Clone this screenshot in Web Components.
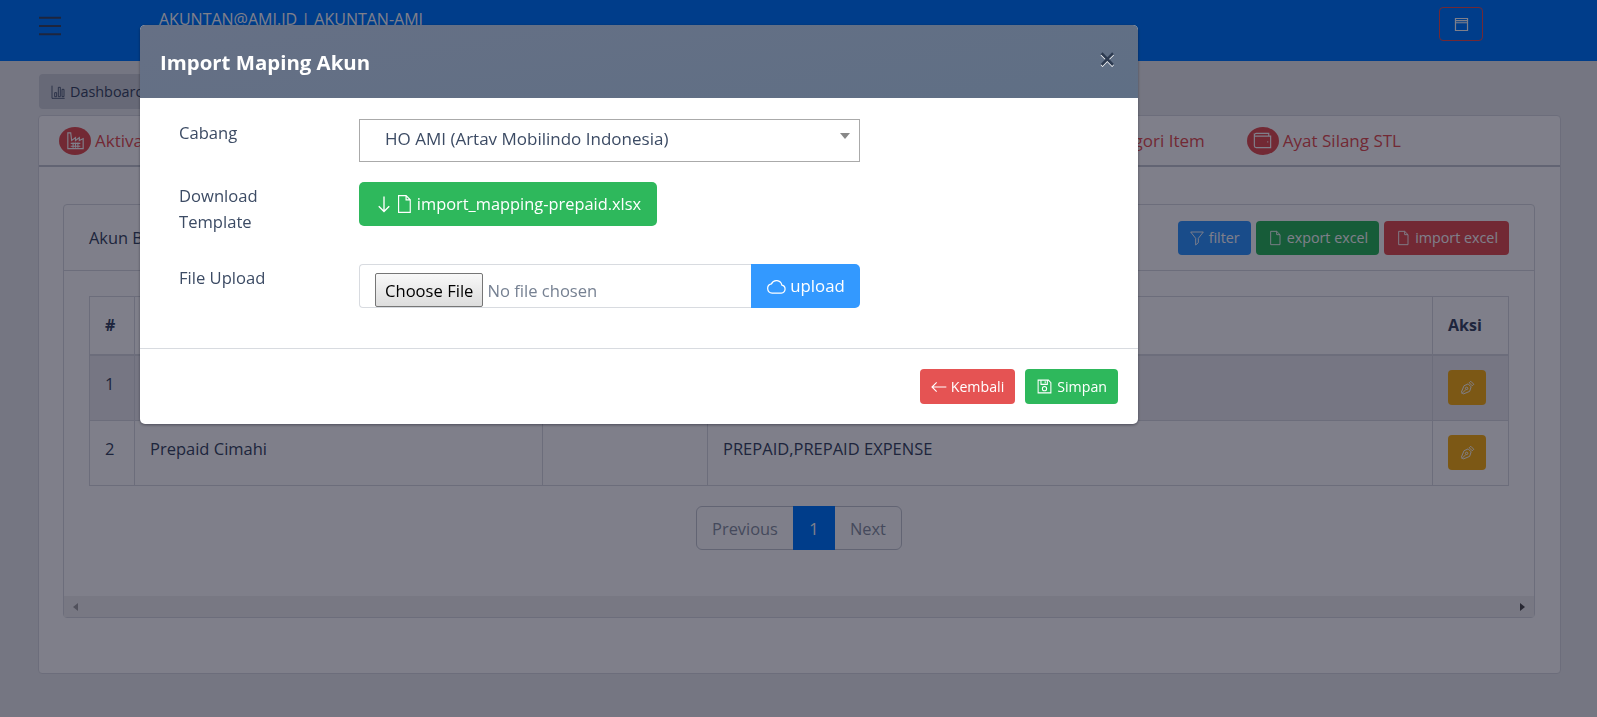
<!DOCTYPE html>
<html>
<head>
<meta charset="utf-8">
<title>Import Maping Akun</title>
<style>
    html, body {
        margin: 0;
        height: 100%;
        overflow: hidden;
        background: #ebedef;
        color: #3c4b64;
        font-family: "Open Sans", "Noto Sans", sans-serif;
        font-size: 16.4px;
    }
</style>
</head>
<body>
<app-header label="AKUNTAN@AMI.ID | AKUNTAN-AMI"></app-header>
<app-main>
    <crumb-tab>Dashboard</crumb-tab>
    <tab-card>
        <tab-link slot="left" icon="factory">Aktiva</tab-link>
        <tab-link slot="right" icon="wallet">Kategori Item</tab-link>
        <tab-link slot="right" icon="wallet">Ayat Silang STL</tab-link>
        <data-panel title-text="Akun Beban">
            <data-table></data-table>
            <page-nav></page-nav>
        </data-panel>
    </tab-card>
</app-main>
<import-modal heading="Import Maping Akun"></import-modal>

<script>
const ICONS = {
    menu: '<path d="M0 3h24M0 12h24M0 21h24"/>',
    window: '<path d="M3.5 3.5h17v17h-17zM3.5 6.5h17M3.5 9.5h17"/>',
    chart: '<path d="M3 2.5v19h19M7 13h3v6H7zM12.5 5h3v14h-3zM18 8h3v11h-3z"/>',
    file: '<path d="M5.5 2h9l5 5v15h-14zM14.5 2v5h5"/>',
    down: '<path d="M12 2v20M5 15l7 7 7-7"/>',
    left: '<path d="M23 12H1.5M8.5 5l-7 7 7 7"/>',
    cloud: '<path d="M7 19.5h10.5a4.6 4.6 0 0 0 .6-9.1A6.3 6.3 0 0 0 6.2 9 5.3 5.3 0 0 0 7 19.5z"/>',
    filter: '<path d="M2.5 3h19l-7.5 9.5v6.5l-4 3.5v-10z"/>',
    save: '<path d="M3 3h14.5L21 6.5V21H3zM7 3v6h9V3M13 4.5v3"/><circle cx="12" cy="15" r="3"/>',
    nib: '<path d="M13.5 6.5l4 4-2 6-8.5 3.5-2.5-2.5 3.5-8.5zM5 19.5l5.5-5.5M15 5l2-2 4 4-2 2z"/><circle cx="11.5" cy="12.5" r="1.6"/>',
    factory: '<path d="M4 20.5V4h3l1 8 4-3v3l4-3v3l4-2v10.500zM7 15h10M7 18h10M9.500 14v5.500M12 14v5.500M14.500 14v5.500"/>',
    wallet: '<path d="M3.500 6.500A2 2 0 0 1 5.500 4.500h13v3M3.500 6.500v11a2 2 0 0 0 2 2h15v-12h-15a2 2 0 0 1-2-1zM17 13.500h1"/>',
}

class LineIcon extends HTMLElement {
    constructor() {
        super()
        this.attachShadow({ mode: 'open' })
        let size = this.getAttribute('size') || 16
        let weight = this.getAttribute('weight') || 1.4
        this.shadowRoot.innerHTML = `
            <style>
                :host { display: inline-flex; flex: none; }
                svg { fill: none; stroke: currentColor; stroke-width: ${weight}; display: block; }
            </style>
            <svg width="${size}" height="${size}" viewBox="0 0 24 24">${ICONS[this.getAttribute('name')]}</svg>
        `
    }
}

class AppHeader extends HTMLElement {
    constructor() {
        super()
        this.attachShadow({ mode: 'open' })
        this.shadowRoot.innerHTML = `
            <style>
                :host {
                    display: flex;
                    height: 61px;
                    background: #007bff;
                    box-sizing: border-box;
                    padding: 7px 114px 0 39px;
                }
                .burger { color: #3c4b64; margin-top: 8px; }
                .label {
                    margin: 1px 0 0 98px;
                    font-size: 16px;
                    line-height: 22px;
                    color: #fff;
                    flex: 1;
                }
                .win {
                    width: 44px;
                    height: 34px;
                    box-sizing: border-box;
                    border: 1px solid #e55353;
                    border-radius: 4px;
                    color: #fff;
                    display: flex;
                    align-items: center;
                    justify-content: center;
                }
            </style>
            <line-icon class="burger" name="menu" size="22" weight="2"></line-icon>
            <div class="label">${this.getAttribute('label')}</div>
            <div class="win"><line-icon name="window" size="17" weight="1.7"></line-icon></div>
        `
    }
}

class AppMain extends HTMLElement {
    constructor() {
        super()
        this.attachShadow({ mode: 'open' })
        this.shadowRoot.innerHTML = `
            <style>
                :host { display: block; padding: 13px 36px 0 38px; }
            </style>
            <slot></slot>
        `
    }
}

class CrumbTab extends HTMLElement {
    constructor() {
        super()
        this.attachShadow({ mode: 'open' })
        this.shadowRoot.innerHTML = `
            <style>
                :host {
                    display: flex;
                    align-items: center;
                    gap: 4px;
                    width: 130px;
                    height: 35px;
                    margin-left: 1px;
                    padding-left: 11px;
                    background: #ced2d8;
                    border-radius: 4px;
                    font-size: 14.4px;
                }
            </style>
            <line-icon name="chart" size="16" weight="1.2"></line-icon>
            <slot></slot>
        `
    }
}

class TabLink extends HTMLElement {
    constructor() {
        super()
        this.attachShadow({ mode: 'open' })
        this.shadowRoot.innerHTML = `
            <style>
                :host {
                    display: flex;
                    align-items: center;
                    gap: 4px;
                    color: #e55353;
                    font-size: 17px;
                }
                .dot {
                    width: 32px;
                    height: 28px;
                    border-radius: 50%;
                    background: #e55353;
                    color: #fff;
                    display: flex;
                    align-items: center;
                    justify-content: center;
                }
            </style>
            <span class="dot"><line-icon name="${this.getAttribute('icon')}" size="23" weight="1.2"></line-icon></span>
            <slot></slot>
        `
    }
}

class TabCard extends HTMLElement {
    constructor() {
        super()
        this.attachShadow({ mode: 'open' })
        this.shadowRoot.innerHTML = `
            <style>
                :host {
                    display: block;
                    height: 559px;
                    margin-top: 6px;
                    box-sizing: border-box;
                    background: #fff;
                    border: 1px solid #d8dbe0;
                    border-radius: 4px;
                }
                .tabs {
                    display: flex;
                    justify-content: space-between;
                    align-items: center;
                    height: 49px;
                    padding: 0 159px 0 20px;
                    border-bottom: 2px solid #c4c9d0;
                }
                .right { display: flex; gap: 42px; }
                .body { padding: 37px 25px 0 24px; }
            </style>
            <div class="tabs">
                <slot name="left"></slot>
                <div class="right"><slot name="right"></slot></div>
            </div>
            <div class="body"><slot></slot></div>
        `
    }
}

class DataPanel extends HTMLElement {
    constructor() {
        super()
        this.attachShadow({ mode: 'open' })
        this.shadowRoot.innerHTML = `
            <style>
                :host {
                    height: 414px;
                    box-sizing: border-box;
                    border: 1px solid #d8dbe0;
                    border-radius: 4px;
                    display: flex;
                    flex-direction: column;
                }
                .head {
                    display: flex;
                    align-items: center;
                    height: 65px;
                    padding: 0 25px 0 25px;
                    border-bottom: 1px solid #d8dbe0;
                    gap: 5px;
                }
                .title { flex: 1; font-size: 16.4px; }
                .inner { flex: 1; padding: 25px 26px 0 25px; }
                .scroll {
                    height: 21px;
                    background: #f1f1f1;
                    display: flex;
                    justify-content: space-between;
                    align-items: center;
                    padding: 0 9px;
                }
                .scroll i { width: 0; height: 0; border: 4.5px solid transparent; }
                .scroll i.l { border-right: 5px solid #a3a3a3; border-left: 0; }
                .scroll i.r { border-left: 5px solid #505050; border-right: 0; }
            </style>
            <div class="head">
                <div class="title">${this.getAttribute('title-text')}</div>
                <act-button color="#3399ff" icon="filter" compact>filter</act-button>
                <act-button color="#2eb85c" icon="file" compact>export excel</act-button>
                <act-button color="#e55353" icon="file" compact>import excel</act-button>
            </div>
            <div class="inner"><slot></slot></div>
            <div class="scroll"><i class="l"></i><i class="r"></i></div>
        `
    }
}

class ActButton extends HTMLElement {
    constructor() {
        super()
        this.attachShadow({ mode: 'open' })
        let icon = this.getAttribute('icon')
        this.shadowRoot.innerHTML = `
            <style>
                :host {
                    display: inline-flex;
                    align-items: center;
                    justify-content: center;
                    box-sizing: border-box;
                    height: var(--h, 34px);
                    padding: 0 var(--px, 11px);
                    gap: var(--g, 4px);
                    background: ${this.getAttribute('color')};
                    color: #fff;
                    border-radius: var(--r, 4px);
                    font-size: var(--fs, 14.3px);
                    white-space: nowrap;
                }
            </style>
            <line-icon name="${icon}" size="${this.getAttribute('isize') || 16}" weight="${this.getAttribute('iweight') || 1.4}"></line-icon>
            <slot></slot>
        `
    }
}

class DataTable extends HTMLElement {
    constructor() {
        super()
        this.attachShadow({ mode: 'open' })
        let edit = '<span class="edit"><line-icon name="nib" size="18" weight="1.3"></line-icon></span>'
        this.shadowRoot.innerHTML = `
            <style>
                :host { display: block; }
                table {
                    border-collapse: collapse;
                    table-layout: fixed;
                    width: 1419px;
                    font-size: 16.5px;
                }
                th, td {
                    border: 1px solid #d8dbe0;
                    padding: 16px 15px 0;
                    text-align: left;
                    vertical-align: top;
                    line-height: 24px;
                }
                th { border-bottom-width: 2px; height: 41px; font-weight: 700; font-size: 16px; padding-top: 16px; }
                td { height: 48px; }
                tr.hi td { background: #ececf0; }
                .edit {
                    display: flex;
                    width: 38px;
                    height: 35px;
                    align-items: center;
                    justify-content: center;
                    background: #f9b115;
                    color: #fff;
                    border-radius: 4px;
                }
                td.act { padding: 14px 15px 0; height: 50px; }
            </style>
            <table>
                <colgroup><col style="width:45px"><col style="width:408px"><col style="width:165px"><col style="width:725px"><col style="width:76px"></colgroup>
                <tr><th>#</th><th></th><th></th><th></th><th>Aksi</th></tr>
                <tr class="hi"><td>1</td><td></td><td></td><td></td><td class="act">${edit}</td></tr>
                <tr><td>2</td><td>Prepaid Cimahi</td><td></td><td>PREPAID,PREPAID EXPENSE</td><td class="act">${edit}</td></tr>
            </table>
        `
    }
}

class PageNav extends HTMLElement {
    constructor() {
        super()
        this.attachShadow({ mode: 'open' })
        this.shadowRoot.innerHTML = `
            <style>
                :host { display: flex; justify-content: center; margin: 20px 0 0 1px; }
                .nav { display: flex; height: 44px; border: 1px solid #c4c9d0; border-radius: 6px; box-sizing: border-box; font-size: 16.4px; color: #8a93a2; }
                span { display: flex; align-items: center; padding: 0 15px; }
                .on { background: #007bff; color: #fff; padding: 0; width: 42px; justify-content: center; margin: -1px 0; }
            </style>
            <div class="nav"><span>Previous</span><span class="on">1</span><span>Next</span></div>
        `
    }
}

class FormRow extends HTMLElement {
    constructor() {
        super()
        this.attachShadow({ mode: 'open' })
        this.shadowRoot.innerHTML = `
            <style>
                :host {
                    display: grid;
                    grid-template-columns: 180px 501px;
                    font-size: 16.6px;
                    line-height: 26px;
                }
                .label { color: #3c4b64; width: 110px; padding-top: 1px; }
            </style>
            <div class="label"><slot name="label"></slot></div>
            <div><slot></slot></div>
        `
    }
}

class ImportModal extends HTMLElement {
    constructor() {
        super()
        this.attachShadow({ mode: 'open' })
        this.shadowRoot.innerHTML = `
            <style>
                :host {
                    position: fixed;
                    inset: 0;
                    background: rgba(0, 0, 21, .5);
                    display: block;
                }
                .modal {
                    width: 998px;
                    height: 399px;
                    margin: 25px 0 0 140px;
                    background: #fff;
                    border-radius: 5px;
                    box-shadow: 0 1px 3px rgba(0, 0, 21, .4);
                    overflow: hidden;
                    display: flex;
                    flex-direction: column;
                }
                .head {
                    height: 73px;
                    flex: none;
                    display: flex;
                    align-items: center;
                    justify-content: space-between;
                    padding: 0 22px 0 20px;
                    background: linear-gradient(170deg, #667085, #5f6f85);
                    color: #fff;
                }
                h5 { margin: 0; font-size: 20.4px; font-weight: 700; }
                .x { color: #2c3a50; font-size: 30px; line-height: 1; font-weight: 600; text-shadow: 0 1px 0 #fff; margin-top: -5px; }
                .body {
                    flex: 1;
                    padding: 21px 0 0 39px;
                    display: flex;
                    flex-direction: column;
                    gap: 20px;
                    border-bottom: 1px solid #d8dbe0;
                }
                .select {
                    height: 43px;
                    box-sizing: border-box;
                    border: 1px solid #aaa;
                    display: flex;
                    align-items: center;
                    justify-content: space-between;
                    padding: 0 9px 3px 25px;
                    color: #3c4b64;
                    font-size: 17px;
                }
                .select i { width: 0; height: 0; border: 5px solid transparent; border-top: 6px solid #888; border-bottom: 0; margin-top: -6px; }
                .last { margin-top: 9px; }
                .up { display: flex; }
                .file {
                    flex: 1;
                    box-sizing: border-box;
                    height: 44px;
                    border: 1px solid #d8dbe0;
                    border-right: 0;
                    border-radius: 4px 0 0 4px;
                    padding: 8px 0 0 15px;
                    overflow: hidden;
                }
                input {
                    font: inherit;
                    line-height: normal;
                    color: #768192;
                    width: 370px;
                    display: block;
                }
                input::file-selector-button {
                    font: inherit;
                    color: #000;
                    height: 34px;
                    padding: 0 9px;
                    margin: 0 4px 0 0;
                    background: linear-gradient(#f8f8f8, #ddd);
                    border: 1px solid #767676;
                    border-radius: 2px;
                }
                .foot {
                    height: 75px;
                    flex: none;
                    display: flex;
                    justify-content: flex-end;
                    align-items: center;
                    gap: 10px;
                    padding: 0 20px;
                    box-sizing: border-box;
                }
                .big { --h: 44px; --fs: 16.8px; --r: 5px; --px: 15px; --g: 3px; }
                .wide { width: 298px; --fs: 16.4px; --g: 1px; }
                .send { width: 109px; border-radius: 0 5px 5px 0; --px: 0; }
                .foot act-button { --h: 35px; --fs: 14.2px; --px: 11px; }
            </style>
            <div class="modal">
                <div class="head"><h5>${this.getAttribute('heading')}</h5><span class="x">&times;</span></div>
                <div class="body">
                    <form-row>
                        <span slot="label">Cabang</span>
                        <div class="select"><span>HO AMI (Artav Mobilindo Indonesia)</span><i></i></div>
                    </form-row>
                    <form-row>
                        <span slot="label">Download Template</span>
                        <act-button class="big wide" color="#2eb85c" icon="down" isize="18" iweight="1.8">
                            <span style="display:flex;align-items:center;gap:3px"><line-icon name="file" size="20" weight="1.4"></line-icon>import_mapping-prepaid.xlsx</span>
                        </act-button>
                    </form-row>
                    <form-row class="last">
                        <span slot="label">File Upload</span>
                        <div class="up">
                            <div class="file"><input type="file"></div>
                            <act-button class="big send" color="#3399ff" icon="cloud" isize="21">upload</act-button>
                        </div>
                    </form-row>
                </div>
                <div class="foot">
                    <act-button color="#e55353" icon="left" isize="16" iweight="1.7">Kembali</act-button>
                    <act-button color="#2eb85c" icon="save" isize="17" iweight="1.5">Simpan</act-button>
                </div>
            </div>
        `
    }
}

customElements.define('line-icon', LineIcon)
customElements.define('app-header', AppHeader)
customElements.define('app-main', AppMain)
customElements.define('crumb-tab', CrumbTab)
customElements.define('tab-link', TabLink)
customElements.define('tab-card', TabCard)
customElements.define('data-panel', DataPanel)
customElements.define('act-button', ActButton)
customElements.define('data-table', DataTable)
customElements.define('page-nav', PageNav)
customElements.define('form-row', FormRow)
customElements.define('import-modal', ImportModal)
</script>
</body>
</html>
